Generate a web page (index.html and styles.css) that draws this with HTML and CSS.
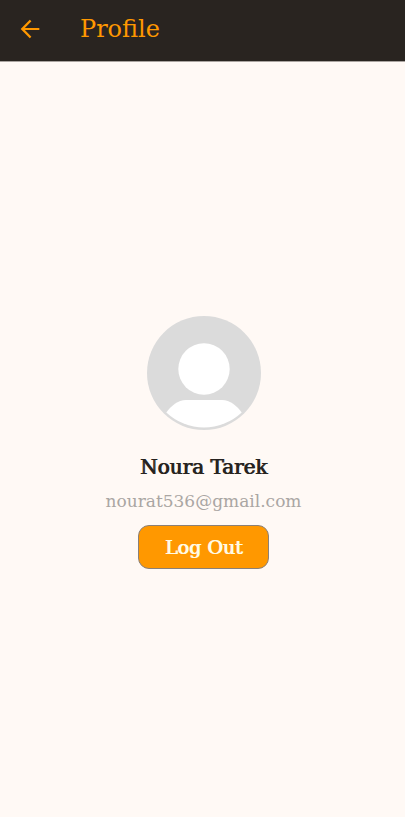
FILE: index.html
```html
<!DOCTYPE html>
<html lang="en">
<head>
<meta charset="utf-8">
<meta name="viewport" content="width=device-width, initial-scale=1">
<title>Profile</title>
<link rel="stylesheet" href="styles.css">
</head>
<body>
<header class="app-bar">
  <button class="back" type="button" aria-label="Back">
    <svg viewBox="0 0 24 24" width="28" height="28" aria-hidden="true"><path fill="currentColor" d="M20 11.1H7.6l5.6-5.7L11.8 4 4 12l7.8 8 1.4-1.4-5.6-5.7H20z"/></svg>
  </button>
  <h1 class="title">Profile</h1>
</header>
<main class="profile">
  <svg class="avatar" viewBox="0 0 114 114" role="img" aria-label="Profile picture">
    <circle cx="57" cy="57" r="57" fill="#dbdbdb"/>
    <circle cx="57" cy="53" r="25.7" fill="#fff"/>
    <path fill="#fff" d="M19.3 96.5C24 90 31 84 39 84H75C83 84 90 90 94.7 96.5A55 55 0 0 1 19.3 96.5Z"/>
  </svg>
  <h2 class="name">Noura Tarek</h2>
  <p class="email">nourat536@gmail.com</p>
  <button class="logout" type="button">Log Out</button>
</main>
</body>
</html>
```
FILE: styles.css
```css
* {
  box-sizing: border-box;
}

body {
  margin: 0;
  min-height: 100vh;
  display: flex;
  flex-direction: column;
  background: #fff9f5;
  color: #272320;
  font-family: "Roboto Slab", "DejaVu Serif", serif;
}

.app-bar {
  display: flex;
  align-items: center;
  gap: 36px;
  height: 62px;
  padding: 0 16px 4px;
  background: #292420;
  border-bottom: 1px solid #aaa4a0;
  color: #ff9800;
}

.back {
  display: flex;
  padding: 0;
  border: 0;
  background: none;
  color: inherit;
}

.title {
  margin: 0;
  font-size: 24px;
  font-weight: 400;
  line-height: 32px;
}

.profile {
  flex: 1;
  display: flex;
  flex-direction: column;
  align-items: center;
  justify-content: center;
  padding: 5px 0 0 2px;
}

.avatar {
  width: 114px;
  height: 114px;
}

.name {
  margin: 19px 0 0;
  font-size: 20px;
  font-weight: 400;
  line-height: 36px;
  text-shadow: 1px 0 0 currentColor;
}

.email {
  margin: 0;
  color: #aaa6a3;
  font-size: 17px;
  line-height: 32px;
}

.logout {
  margin-top: 8px;
  height: 44px;
  padding: 0 26px;
  border: 1px solid #8a8078;
  border-radius: 11px;
  background: #ff9800;
  color: #fffbe6;
  font: 400 19px/28px "Roboto Slab", "DejaVu Serif", serif;
  text-shadow: 1px 0 0 currentColor;
}
```
